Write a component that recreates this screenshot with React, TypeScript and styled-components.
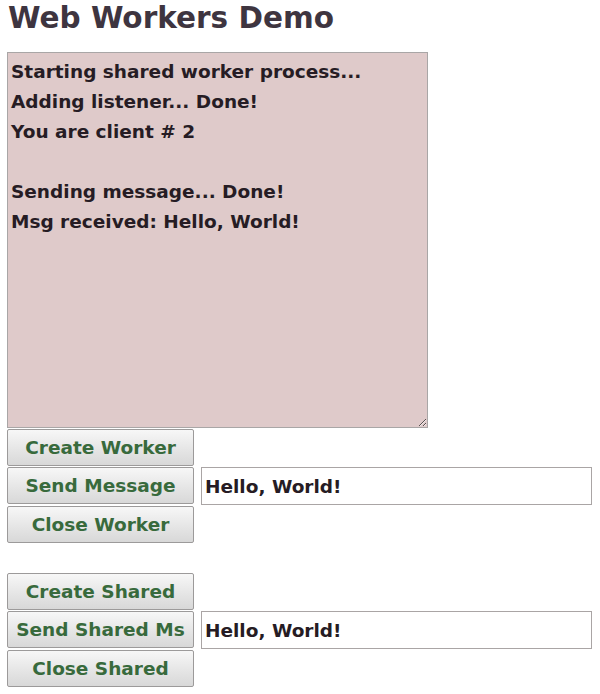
import { createGlobalStyle, styled } from 'styled-components';

const GlobalStyle = createGlobalStyle`
  html, body {
    margin: 0;
    padding: 0;
    background: #ffffff;
  }
  body {
    font-family: "DejaVu Sans", Verdana, sans-serif;
  }
`

const log = [
  'Starting shared worker process...',
  'Adding listener... Done!',
  'You are client # 2',
  '',
  'Sending message... Done!',
  'Msg received: Hello, World!',
].join('\n')

// the second send label is cut short in the original button
const groups = [
  { create: 'Create Worker', send: 'Send Message', close: 'Close Worker' },
  { create: 'Create Shared', send: 'Send Shared Ms', close: 'Close Shared' },
]

function App() {
  return (
    <Page>
      <GlobalStyle />
      <Title>Web Workers Demo</Title>
      <Output readOnly value={log} />
      {groups.map((g, i) => (
        <Group key={g.create} $first={i === 0}>
          <Row>
            <Button>{g.create}</Button>
          </Row>
          <Row>
            <Button>{g.send}</Button>
            <MessageInput readOnly value="Hello, World!" />
          </Row>
          <Row>
            <Button>{g.close}</Button>
          </Row>
        </Group>
      ))}
    </Page>
  )
}

export default App

const Page = styled.div`
  padding: 0 7px;
  width: 600px;
  box-sizing: border-box;
`

const Title = styled.h1`
  margin: 0 0 16px 1px;
  font-family: "DejaVu Sans", Verdana, sans-serif;
  font-size: 29.5px;
  line-height: 36px;
  font-weight: bold;
  color: #3e3540;
`

const Output = styled.textarea`
  display: block;
  box-sizing: border-box;
  width: 421px;
  height: 376px;
  margin: 0 0 1px 0;
  padding: 4px 3px;
  border: 1px solid #a9a6a6;
  background: #dfcaca;
  color: #261c24;
  font-family: "DejaVu Sans", Verdana, sans-serif;
  font-size: 18.5px;
  font-weight: bold;
  line-height: 30px;
  outline: none;
  overflow: hidden;
`

const Group = styled.div<{ $first: boolean }>`
  display: flex;
  flex-direction: column;
  gap: 1px;
  margin-top: ${p => (p.$first ? '0' : '30px')};
`

const Row = styled.div`
  display: flex;
  align-items: flex-start;
  gap: 7px;
`

const Button = styled.button`
  box-sizing: border-box;
  width: 187px;
  height: 37px;
  padding: 0 4px;
  border: 1px solid #9c9a9a;
  border-radius: 2px;
  background: linear-gradient(#f7f7f7, #e4e4e4 60%, #d8d8d8);
  color: #386a3c;
  font-family: "DejaVu Sans", Verdana, sans-serif;
  font-size: 18.5px;
  font-weight: bold;
  white-space: nowrap;
  overflow: hidden;
  text-align: center;
  cursor: pointer;
`

const MessageInput = styled.input`
  box-sizing: border-box;
  width: 391px;
  height: 38px;
  padding: 0 3px;
  border: 1px solid #aaa5a5;
  background: #ffffff;
  color: #261c24;
  font-family: "DejaVu Sans", Verdana, sans-serif;
  font-size: 18.5px;
  font-weight: bold;
  outline: none;
`
